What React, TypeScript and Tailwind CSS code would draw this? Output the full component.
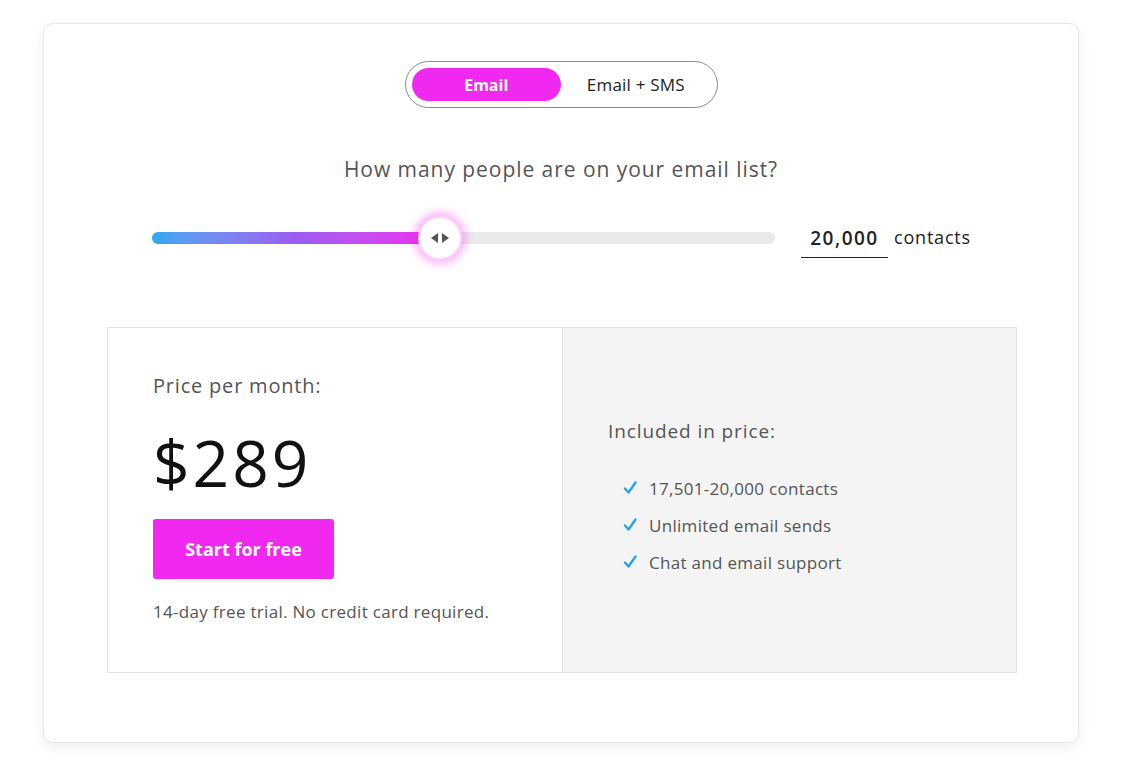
import { useState } from "react";

const features = ["17,501-20,000 contacts", "Unlimited email sends", "Chat and email support"];

function Check() {
  return (
    <svg width="14" height="14" viewBox="0 0 14 14" fill="none" className="shrink-0">
      <path d="M2 7.5 L5.5 11.5 L12.5 1.5" stroke="#2aa3e3" strokeWidth="2.4" strokeLinecap="round" strokeLinejoin="round" />
    </svg>
  );
}

export default function App() {
  const [plan, setPlan] = useState("email");

  return (
    <div className="min-h-screen bg-white pt-[23px] font-['Open_Sans',sans-serif] text-[#222]">
      <div className="mx-[43px] h-[720px] rounded-[10px] border border-[#e6e6e6] bg-white shadow-[0_4px_14px_rgba(0,0,0,0.07)] px-[63px] pt-[37px]">
        {/* plan toggle */}
        <div className="flex justify-center">
          <div className="flex h-[47px] w-[313px] items-center rounded-full border border-[#8a8a8a] px-[6px]">
            <button
              onClick={() => setPlan("email")}
              className={`h-[33px] w-[150px] rounded-full text-[16px] font-bold ${plan === "email" ? "bg-[#f128ef] text-white" : "text-[#222]"}`}
            >
              Email
            </button>
            <button
              onClick={() => setPlan("sms")}
              className={`h-[33px] w-[150px] rounded-full text-[17px] tracking-[0.2px] ${plan === "sms" ? "bg-[#f128ef] font-bold text-white" : "text-[#222]"}`}
            >
              Email + SMS
            </button>
          </div>
        </div>

        <p className="mt-[47px] text-center text-[21px] leading-[28px] tracking-[0.95px] text-[#555]">How many people are on your email list?</p>

        {/* slider */}
        <div className="mt-[31px] flex h-[48px] items-center pl-[45px]">
          <div className="relative h-[12px] w-[623px] rounded-full bg-[#eaeaea]">
            <div className="h-full w-[288px] rounded-full bg-gradient-to-r from-[#2aa8f2] via-[#9b5cf0] to-[#f120ef]" />
            <div className="absolute left-[266px] top-[-16px] flex h-[44px] w-[44px] items-center justify-center gap-[2px] rounded-full border-2 border-[#fbd4fa] bg-white shadow-[0_0_9px_4px_rgba(241,40,239,0.35)]">
              <svg width="8" height="10" viewBox="0 0 8 10"><path d="M7 0 L0 5 L7 10 Z" fill="#555" /></svg>
              <svg width="8" height="10" viewBox="0 0 8 10"><path d="M1 0 L8 5 L1 10 Z" fill="#555" /></svg>
            </div>
          </div>
          <div className="ml-[26px] flex items-center">
            <div className="w-[87px] border-b border-[#222] pb-[4px] pt-[6px] text-center text-[19px] font-semibold tracking-[1.5px] text-[#222]">
              20,000
            </div>
            <span className="ml-[6px] pb-[2px] text-[18px] tracking-[0.8px] text-[#222]">contacts</span>
          </div>
        </div>

        {/* pricing box */}
        <div className="mt-[65px] flex h-[346px] w-[910px] border border-[#e2e2e2]">
          <div className="w-[455px] border-r border-[#e2e2e2] bg-white pl-[45px] pt-[43px]">
            <p className="text-[20px] tracking-[0.8px] text-[#555]">Price per month:</p>
            <p className="mt-[26px] text-[64px] leading-[72px] tracking-[3px] text-[#111]">$289</p>
            <button className="mt-[20px] h-[60px] w-[181px] rounded-[3px] bg-[#f128ef] text-[18px] font-bold text-white">
              Start for free
            </button>
            <p className="mt-[20px] text-[17px] tracking-[0.3px] text-[#555]">14-day free trial. No credit card required.</p>
          </div>
          <div className="flex-1 bg-[#f4f4f4] pl-[45px] pt-[89px]">
            <p className="text-[19px] tracking-[0.9px] text-[#555]">Included in price:</p>
            <ul className="mt-[31px] flex flex-col gap-[14px] pl-[15px]">
              {features.map((f) => (
                <li key={f} className="flex items-center gap-[12px] text-[17px] leading-[23px] tracking-[0.3px] text-[#555]">
                  <Check />
                  {f}
                </li>
              ))}
            </ul>
          </div>
        </div>
      </div>
    </div>
  );
}
